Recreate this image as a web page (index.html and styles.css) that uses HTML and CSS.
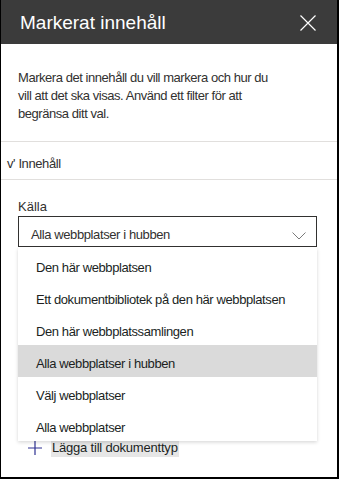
FILE: index.html
```html
<!DOCTYPE html>
<html lang="sv">
<head>
<meta charset="UTF-8">
<meta name="viewport" content="width=device-width, initial-scale=1.0">
<title>Markerat innehåll</title>
<link rel="stylesheet" href="styles.css">
</head>
<body>
<div class="panel">
    <div class="header">
        <h1 class="title">Markerat innehåll</h1>
        <svg class="close" width="16" height="16" viewBox="0 0 16 16">
            <path d="M0.5 0.5 L15.5 15.5 M15.5 0.5 L0.5 15.5" stroke="#ffffff" stroke-width="1.2" fill="none"/>
        </svg>
    </div>

    <p class="intro">Markera det innehåll du vill markera och hur du vill att det ska visas. Använd ett filter för att begränsa ditt val.</p>

    <div class="section">v' Innehåll</div>

    <div class="field">
        <div class="label">Källa</div>
        <div class="dropdown">
            <span>Alla webbplatser i hubben</span>
            <svg class="chevron" width="14" height="8" viewBox="0 0 14 8">
                <path d="M0.5 0.5 L7 7 L13.5 0.5" stroke="#7a7a7a" stroke-width="1" fill="none"/>
            </svg>
        </div>

        <!-- öppen lista ligger över innehållet under -->
        <div class="options">
            <div class="option">Den här webbplatsen</div>
            <div class="option">Ett dokumentbibliotek på den här webbplatsen</div>
            <div class="option">Den här webbplatssamlingen</div>
            <div class="option selected">Alla webbplatser i hubben</div>
            <div class="option">Välj webbplatser</div>
            <div class="option">Alla webbplatser</div>
        </div>
    </div>

    <div class="add-row">
        <svg class="plus" width="14" height="14" viewBox="0 0 14 14">
            <path d="M7 0 V14 M0 7 H14" stroke="#2e3192" stroke-width="1.2" fill="none"/>
        </svg>
        <span class="add-text">Lägga till dokumenttyp</span>
    </div>
</div>
</body>
</html>
```

FILE: styles.css
```css
    body, html {
        margin: 0;
        background: #ffffff;
    }

    .panel {
        width: 339px;
        height: 479px;
        box-sizing: border-box;
        border-left: 1px solid #000;
        border-right: 2px solid #000;
        border-bottom: 2px solid #000;
        background: #ffffff;
        font-family: "Liberation Sans", Arial, sans-serif;
        font-size: 13px;
        color: #323130;
        overflow: hidden;
    }

    .header {
        height: 44px;
        box-sizing: border-box;
        background: #3b3b3b;
        display: flex;
        justify-content: space-between;
        align-items: flex-start;
        padding: 12px 21px 0 19px;
    }

    .title {
        margin: 0;
        font-size: 19px;
        font-weight: normal;
        line-height: 22px;
        color: #ffffff;
    }

    .close {
        margin-top: 3px;
    }

    .intro {
        margin: 0;
        padding: 25px 62px 18px 17px;
        line-height: 18px;
        letter-spacing: -0.45px;
        border-bottom: 1px solid #e1dfdd;
    }

    .section {
        height: 38px;
        box-sizing: border-box;
        padding: 12px 0 0 6px;
        line-height: 20px;
        letter-spacing: -0.4px;
        border-bottom: 1px solid #e1dfdd;
    }

    .field {
        position: relative;
        margin: 0 20px 0 17px;
        padding-top: 18px;
    }

    .label {
        line-height: 18px;
    }

    .dropdown {
        height: 31px;
        box-sizing: border-box;
        border: 1px solid #323130;
        padding: 8px 10px 0 12px;
        line-height: 20px;
        display: flex;
        justify-content: space-between;
        letter-spacing: -0.4px;
    }

    .chevron {
        margin-top: 7px;
    }

    .options {
        position: absolute;
        top: 100%;
        left: 0;
        right: 0;
        padding-top: 2px;
        background: #ffffff;
        box-shadow: 0 1.6px 3.6px rgba(0, 0, 0, 0.16), 0 0.3px 0.9px rgba(0, 0, 0, 0.12);
        z-index: 2;
    }

    .option {
        height: 32px;
        box-sizing: border-box;
        padding: 11px 0 0 18px;
        line-height: 16px;
        letter-spacing: -0.4px;
        color: #201f1e;
    }

    .option.selected {
        background: #dadada;
    }

    .add-row {
        display: flex;
        align-items: center;
        margin-top: 191px;
        padding-left: 27px;
    }

    .add-text {
        margin-left: 9px;
        padding: 0 1px;
        line-height: 19px;
        background: #e6e6e6;
        color: #201f1e;
        letter-spacing: -0.2px;
    }
```
